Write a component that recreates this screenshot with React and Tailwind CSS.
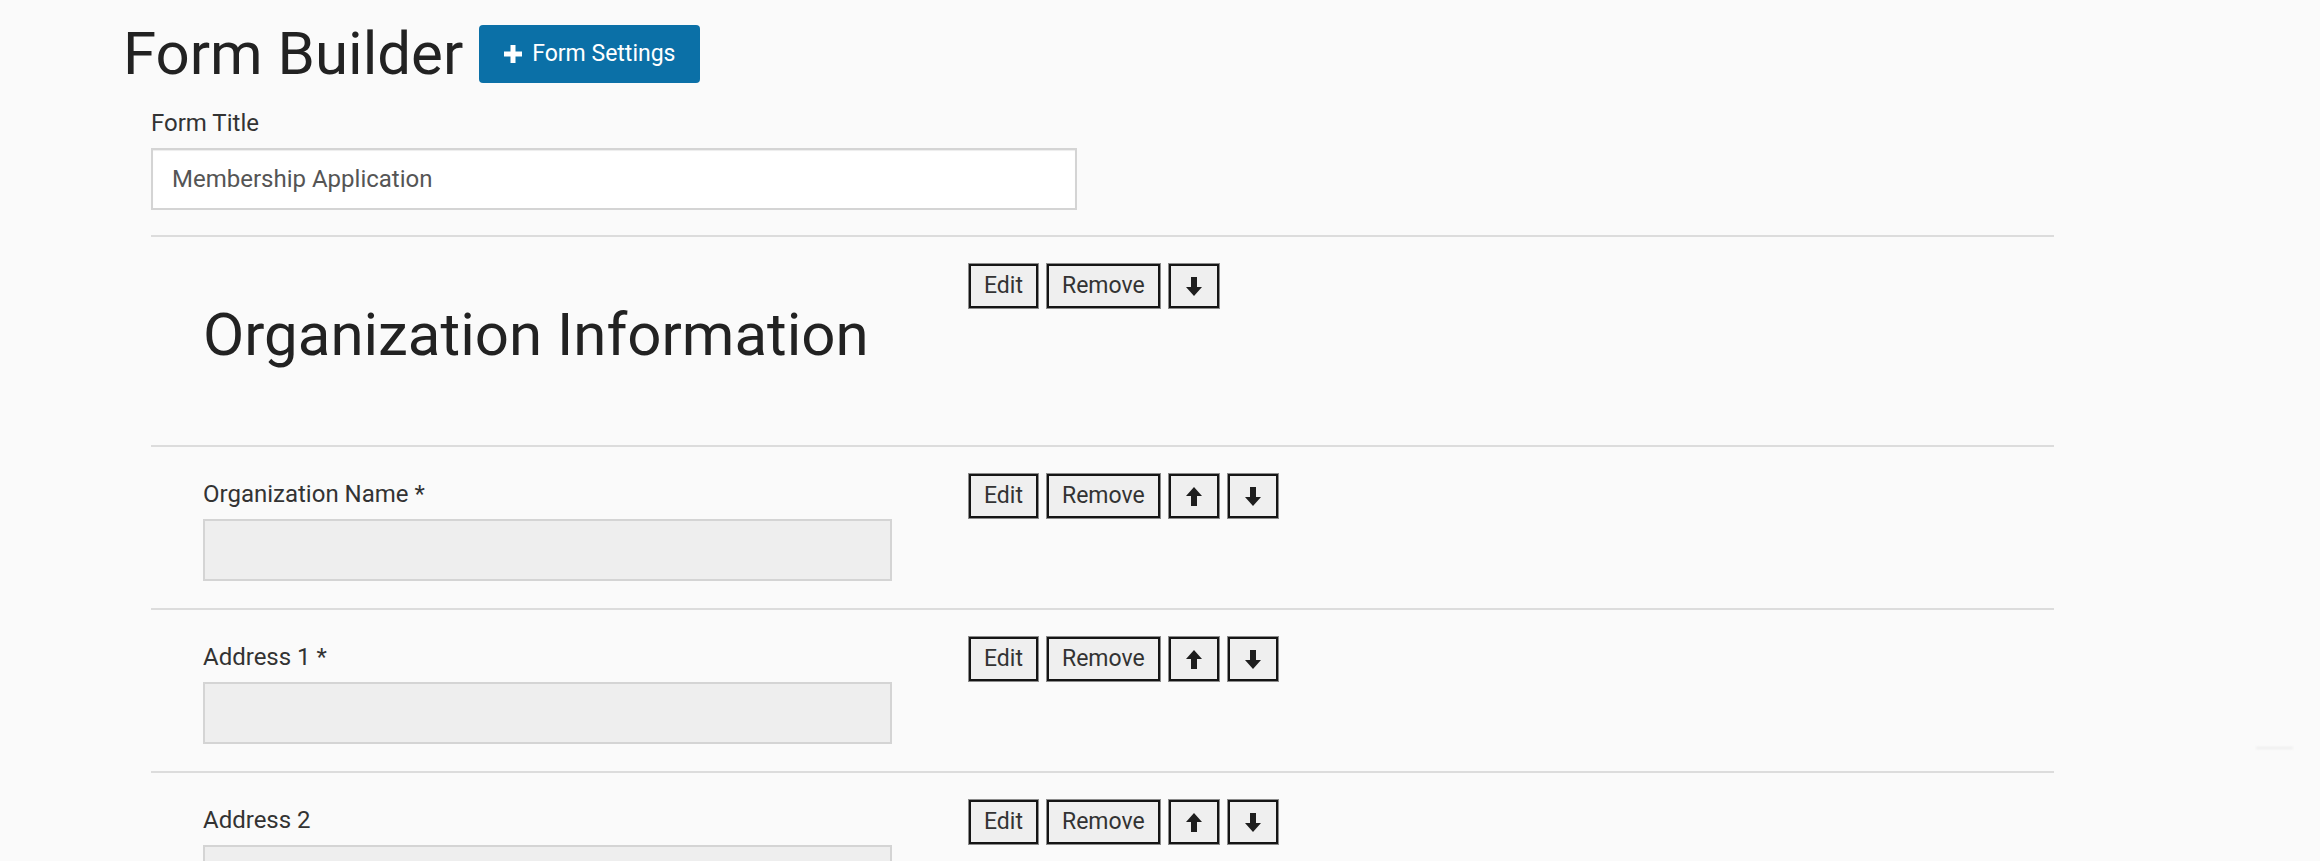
import React from "react";

const ArrowIcon = ({ dir }) => (
  <svg width="16" height="19" viewBox="0 0 16 19" className={dir === "down" ? "rotate-180" : ""}>
    <polygon points="8,0 16,9 11,9 11,19 5,19 5,9 0,9" fill="#1e1e1e" />
  </svg>
);

const PlusIcon = () => (
  <svg width="18" height="18" viewBox="0 0 18 18">
    <rect x="6.5" y="0" width="5" height="18" fill="#fff" />
    <rect x="0" y="6.5" width="18" height="5" fill="#fff" />
  </svg>
);

const ToolButton = ({ children, square }) => (
  <button
    type="button"
    className={`h-[44px] ${square ? "w-[50px]" : "px-[13px]"} flex items-center justify-center bg-[#efefef] border-2 border-[#151515] shadow-[0_0_0_1px_#8c8c8c] text-[23px] leading-[40px] text-[#333]`}
  >
    {children}
  </button>
);

const Tools = ({ up, down }) => (
  <div className="flex gap-[9px]">
    <ToolButton>Edit</ToolButton>
    <ToolButton>Remove</ToolButton>
    {up && (
      <ToolButton square>
        <ArrowIcon dir="up" />
      </ToolButton>
    )}
    {down && (
      <ToolButton square>
        <ArrowIcon dir="down" />
      </ToolButton>
    )}
  </div>
);

const fields = [
  { label: "Organization Name *" },
  { label: "Address 1 *" },
  { label: "Address 2" },
];

const App = () => {
  return (
    <div className="min-h-screen bg-[#fafafa] [font-family:Roboto,sans-serif] text-[#333] pl-[123px] pt-[21px] relative">
      {/* header */}
      <div className="flex items-center gap-[16px]">
        <h1 className="text-[60px] leading-[66px] font-normal text-[#222]">Form Builder</h1>
        <button
          type="button"
          className="h-[58px] px-[25px] flex items-center gap-[10px] bg-[#0b70a7] rounded-[4px] text-white text-[23px]"
        >
          <PlusIcon />
          Form Settings
        </button>
      </div>

      <div className="ml-[28px] w-[1903px] mt-[20px]">
        {/* form title */}
        <label className="block text-[24px] leading-[32px] text-[#333]">Form Title</label>
        <div className="mt-[9px] w-[926px] h-[62px] bg-white border-2 border-[#d4d4d4] shadow-[inset_0_1px_1px_rgba(0,0,0,0.075)] flex items-center px-[19px] text-[24px] text-[#555]">
          Membership Application
        </div>

        {/* heading section */}
        <div className="mt-[25px] border-t-2 border-[#dcdcdc] flex">
          <div className="w-[818px] pl-[52px] pt-[65px] pb-[77px]">
            <h2 className="text-[60px] leading-[66px] font-normal text-[#222]">Organization Information</h2>
          </div>
          <div className="pt-[27px]">
            <Tools down />
          </div>
        </div>

        {/* field sections */}
        {fields.map((f) => (
          <div key={f.label} className="border-t-2 border-[#dcdcdc] flex">
            <div className="w-[818px] pl-[52px] pt-[31px] pb-[27px]">
              <label className="block text-[24px] leading-[33px] text-[#333]">{f.label}</label>
              <div className="mt-[8px] w-[689px] h-[62px] bg-[#eeeeee] border-2 border-[#d4d4d4]"></div>
            </div>
            <div className="pt-[27px]">
              <Tools up down />
            </div>
          </div>
        ))}
      </div>

      <div className="absolute left-[2256px] top-[747px] w-[37px] h-[2px] rounded-full bg-[#ececec] blur-[1px]"></div>
    </div>
  );
};

export default App;
